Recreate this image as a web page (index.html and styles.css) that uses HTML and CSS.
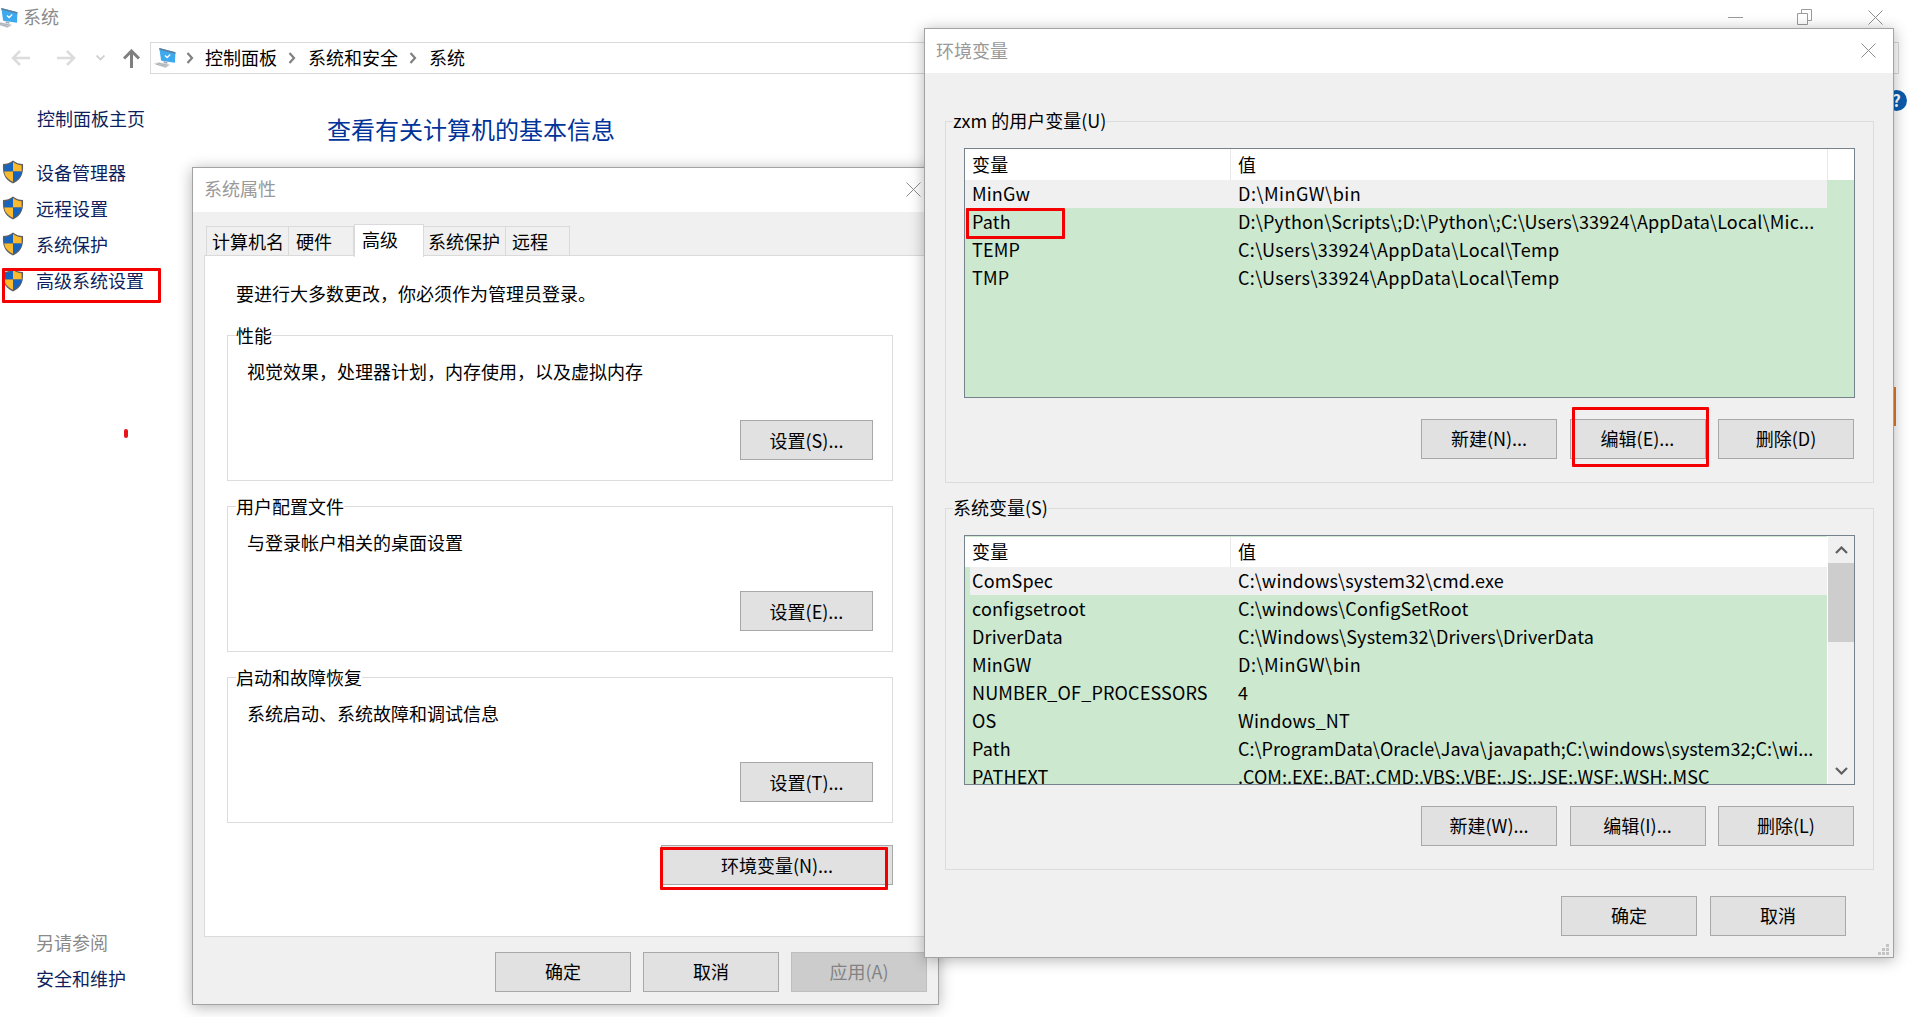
FILE: index.html
```html
<!DOCTYPE html>
<html>
<head>
    <title>系统</title>
    <meta name="viewport" content="width=device-width, initial-scale=1.0">
    <link rel="stylesheet" href="styles.css">
</head>
<body>
    <svg class="defs" width="0" height="0">
        <symbol id="shield" viewBox="0 0 22 24">
            <path d="M11 0.500 C8 3 4.500 4 1 4 C0.500 12 1.500 19 11 23.500 C20.500 19 21.500 12 21 4 C17.500 4 14 3 11 0.500 Z" fill="#5f5f5f"/>
            <path d="M11 2 C8.500 4 5.500 5 2.500 5.200 L2.300 11.500 H11 Z" fill="#1565c0"/>
            <path d="M11 2 C13.500 4 16.500 5 19.500 5.200 L19.700 11.500 H11 Z" fill="#fbb92e"/>
            <path d="M2.300 11.500 H11 V21.800 C5 19 2.700 15.500 2.300 11.500 Z" fill="#fbb92e"/>
            <path d="M19.700 11.500 H11 V21.800 C17 19 19.300 15.500 19.700 11.500 Z" fill="#1565c0"/>
        </symbol>
        <symbol id="computer" viewBox="0 0 24 21">
            <path d="M6.500 0 L23.500 4.500 L23 15.500 L8.500 13.500 Z" fill="#3fa9ef"/>
            <path d="M6.500 0 L23.500 4.500 L23.400 6 L6.800 1.800 Z" fill="#5c7f99"/>
            <path d="M12.500 7.800 L14.800 10 L18 6.800" fill="none" stroke="#fff" stroke-width="1.300"/>
            <path d="M11 14 L15 14.500 L15 16.500 L11 16 Z" fill="#a4adb3"/>
            <path d="M0.500 16.500 L6 15 L18 17.500 L13 21 Z" fill="#cfd4d8"/>
            <path d="M3 17 L14 19.500 M5 16 L16 18.200" stroke="#98a1a8" stroke-width="0.700"/>
        </symbol>
        <symbol id="cross" viewBox="0 0 15 15">
            <path d="M0.500 0.500 L14.500 14.500 M14.500 0.500 L0.500 14.500" fill="none" stroke="#8c8c8c" stroke-width="1"/>
        </symbol>
    </svg>

    <div class="window">
        <div class="titlebar">
            <svg class="title-icon"><use href="#computer"/></svg>
            <span class="window-title">系统</span>
            <div class="window-controls">
                <svg width="15" height="15" viewBox="0 0 15 15"><path d="M0 7.500 H15" stroke="#9a9a9a" stroke-width="1"/></svg>
                <svg width="15" height="16" viewBox="0 0 15 16"><path d="M0.500 4.500 H10.500 V15.500 H0.500 Z M4.500 4.500 V0.500 H14.500 V11.500 H10.500" fill="none" stroke="#9a9a9a" stroke-width="1"/></svg>
                <svg class="control-close" width="15" height="15"><use href="#cross"/></svg>
            </div>
        </div>

        <div class="navbar">
            <svg class="nav-back" width="19" height="16" viewBox="0 0 19 16"><path d="M19 8 H2 M9 1 L2 8 L9 15" fill="none" stroke="#dcdcdc" stroke-width="2.500"/></svg>
            <svg class="nav-forward" width="19" height="16" viewBox="0 0 19 16"><path d="M0 8 H17 M10 1 L17 8 L10 15" fill="none" stroke="#dcdcdc" stroke-width="2.500"/></svg>
            <svg class="nav-down" width="9" height="6" viewBox="0 0 9 6"><path d="M0.500 0.500 L4.500 4.500 L8.500 0.500" fill="none" stroke="#d0d0d0" stroke-width="1.800"/></svg>
            <svg class="nav-up" width="17" height="19" viewBox="0 0 17 19"><path d="M8.500 19 V3 M1 9.500 L8.500 2 L16 9.500" fill="none" stroke="#7f7f7f" stroke-width="3"/></svg>
            <div class="address">
                <svg class="address-icon"><use href="#computer"/></svg>
                <svg class="sep" width="8" height="12" viewBox="0 0 8 12"><path d="M1.500 1 L6 6 L1.500 11" fill="none" stroke="#808080" stroke-width="2.200"/></svg>
                <span>控制面板</span>
                <svg class="sep" width="8" height="12" viewBox="0 0 8 12"><path d="M1.500 1 L6 6 L1.500 11" fill="none" stroke="#808080" stroke-width="2.200"/></svg>
                <span>系统和安全</span>
                <svg class="sep" width="8" height="12" viewBox="0 0 8 12"><path d="M1.500 1 L6 6 L1.500 11" fill="none" stroke="#808080" stroke-width="2.200"/></svg>
                <span>系统</span>
            </div>
        </div>

        <div class="main">
            <div class="sidebar">
                <div class="side-home">控制面板主页</div>
                <div class="side-item"><svg class="shield"><use href="#shield"/></svg>设备管理器</div>
                <div class="side-item"><svg class="shield"><use href="#shield"/></svg>远程设置</div>
                <div class="side-item"><svg class="shield"><use href="#shield"/></svg>系统保护</div>
                <div class="side-item"><svg class="shield"><use href="#shield"/></svg>高级系统设置</div>
                <div class="side-bottom">
                    <div class="side-muted">另请参阅</div>
                    <div class="side-link">安全和维护</div>
                </div>
            </div>
            <h1 class="page-heading">查看有关计算机的基本信息</h1>
        </div>
    </div>

    <div class="help-dot">?</div>
    <div class="orange-edge"></div>
    <div class="red-dot"></div>

    <!-- 系统属性 -->
    <div class="dialog sys-dialog">
        <div class="dialog-title">
            <span>系统属性</span>
            <svg class="dialog-close"><use href="#cross"/></svg>
        </div>
        <div class="dialog-body">
            <div class="tabs">
                <div class="tab">计算机名</div>
                <div class="tab">硬件</div>
                <div class="tab tab-active">高级</div>
                <div class="tab">系统保护</div>
                <div class="tab">远程</div>
            </div>
            <div class="tab-panel">
                <div class="panel-intro">要进行大多数更改，你必须作为管理员登录。</div>
                <div class="group sys-group">
                    <div class="group-title">性能</div>
                    <div class="group-desc">视觉效果，处理器计划，内存使用，以及虚拟内存</div>
                    <div class="btn-row"><button class="btn btn-set">设置(S)...</button></div>
                </div>
                <div class="group sys-group">
                    <div class="group-title">用户配置文件</div>
                    <div class="group-desc">与登录帐户相关的桌面设置</div>
                    <div class="btn-row"><button class="btn btn-set">设置(E)...</button></div>
                </div>
                <div class="group sys-group">
                    <div class="group-title">启动和故障恢复</div>
                    <div class="group-desc">系统启动、系统故障和调试信息</div>
                    <div class="btn-row"><button class="btn btn-set">设置(T)...</button></div>
                </div>
                <div class="env-row"><button class="btn btn-env">环境变量(N)...</button></div>
            </div>
            <div class="sys-footer">
                <button class="btn">确定</button>
                <button class="btn">取消</button>
                <button class="btn btn-disabled">应用(A)</button>
            </div>
        </div>
    </div>

    <!-- 环境变量 -->
    <div class="dialog env-dialog">
        <div class="dialog-title">
            <span>环境变量</span>
            <svg class="dialog-close"><use href="#cross"/></svg>
        </div>
        <div class="dialog-body env-body">
            <div class="group env-group">
                <div class="group-title">zxm 的用户变量(U)</div>
                <div class="list">
                    <div class="list-main">
                        <div class="list-head"><div class="cell cell-head">变量</div><div class="cell">值</div></div>
                        <div class="row row-current"><div class="cell">MinGw</div><div class="cell ls-xwide">D:\MinGW\bin</div></div>
                        <div class="row"><div class="cell">Path</div><div class="cell">D:\Python\Scripts\;D:\Python\;C:\Users\33924\AppData\Local\Mic...</div></div>
                        <div class="row"><div class="cell">TEMP</div><div class="cell ls-wide">C:\Users\33924\AppData\Local\Temp</div></div>
                        <div class="row"><div class="cell">TMP</div><div class="cell ls-wide">C:\Users\33924\AppData\Local\Temp</div></div>
                    </div>
                    <div class="list-gutter"></div>
                </div>
                <div class="btn-row env-btns">
                    <button class="btn btn-env-small">新建(N)...</button>
                    <button class="btn btn-env-small">编辑(E)...</button>
                    <button class="btn btn-env-small">删除(D)</button>
                </div>
            </div>
            <div class="group env-group">
                <div class="group-title">系统变量(S)</div>
                <div class="list">
                    <div class="list-main">
                        <div class="list-head list-head-gap"><div class="cell cell-head">变量</div><div class="cell">值</div></div>
                        <div class="row row-current row-inset"><div class="cell">ComSpec</div><div class="cell">C:\windows\system32\cmd.exe</div></div>
                        <div class="row"><div class="cell">configsetroot</div><div class="cell">C:\windows\ConfigSetRoot</div></div>
                        <div class="row"><div class="cell">DriverData</div><div class="cell">C:\Windows\System32\Drivers\DriverData</div></div>
                        <div class="row"><div class="cell">MinGW</div><div class="cell ls-xwide">D:\MinGW\bin</div></div>
                        <div class="row"><div class="cell">NUMBER_OF_PROCESSORS</div><div class="cell">4</div></div>
                        <div class="row"><div class="cell">OS</div><div class="cell">Windows_NT</div></div>
                        <div class="row"><div class="cell">Path</div><div class="cell ls-none">C:\ProgramData\Oracle\Java\javapath;C:\windows\system32;C:\wi...</div></div>
                        <div class="row"><div class="cell">PATHEXT</div><div class="cell ls-none">.COM;.EXE;.BAT;.CMD;.VBS;.VBE;.JS;.JSE;.WSF;.WSH;.MSC</div></div>
                    </div>
                    <div class="scrollbar">
                        <div class="scroll-arrow">
                            <svg width="13" height="8" viewBox="0 0 13 8"><path d="M1 7 L6.500 1.500 L12 7" fill="none" stroke="#606060" stroke-width="2.200"/></svg>
                        </div>
                        <div class="scroll-thumb"></div>
                        <div class="scroll-track"></div>
                        <div class="scroll-arrow">
                            <svg width="13" height="8" viewBox="0 0 13 8"><path d="M1 1 L6.500 6.500 L12 1" fill="none" stroke="#606060" stroke-width="2.200"/></svg>
                        </div>
                    </div>
                </div>
                <div class="btn-row env-btns">
                    <button class="btn btn-env-small">新建(W)...</button>
                    <button class="btn btn-env-small">编辑(I)...</button>
                    <button class="btn btn-env-small">删除(L)</button>
                </div>
            </div>
            <div class="env-footer">
                <button class="btn btn-env-small">确定</button>
                <button class="btn btn-env-small">取消</button>
            </div>
        </div>
        <svg class="grip" width="11" height="11" viewBox="0 0 11 11"><path d="M8 0 h3 v3 h-3 Z M4 4 h3 v3 h-3 Z M8 4 h3 v3 h-3 Z M0 8 h3 v3 h-3 Z M4 8 h3 v3 h-3 Z M8 8 h3 v3 h-3 Z" fill="#c4c4c4"/></svg>
    </div>

    <!-- 红框标注 -->
    <div class="mark mark-side"></div>
    <div class="mark mark-env"></div>
    <div class="mark mark-path"></div>
    <div class="mark mark-edit"></div>
</body>
</html>
```

FILE: styles.css
```css
* {
    box-sizing: border-box;
}
html, body {
    margin: 0;
    padding: 0;
}
body {
    position: relative;
    width: 1912px;
    height: 1017px;
    overflow: hidden;
    background-color: white;
    color: black;
    font-family: "Noto Sans CJK SC", "Noto Sans", sans-serif;
    font-size: 18px;
    line-height: 28px;
}
.defs {
    position: absolute;
}

/* window behind the dialogs */
.window {
    display: flex;
    flex-direction: column;
    height: 1017px;
}
.titlebar {
    display: flex;
    align-items: center;
    height: 34px;
}
.title-icon {
    width: 23px;
    height: 20px;
    margin-left: -5px;
    margin-top: 2px;
}
.window-title {
    margin-left: 5px;
    margin-bottom: 2px;
    color: #8a8a8a;
}
.window-controls {
    display: flex;
    align-items: center;
    gap: 54px;
    margin-left: auto;
    margin-right: 29px;
}
.control-close {
    margin-left: 2px;
}
.navbar {
    display: flex;
    align-items: center;
    height: 32px;
    margin-top: 8px;
}
.nav-back {
    margin-left: 11px;
}
.nav-forward {
    margin-left: 27px;
}
.nav-down {
    margin-left: 20px;
}
.nav-up {
    margin-left: 18px;
}
.address {
    display: flex;
    align-items: center;
    flex: 1;
    height: 32px;
    margin-left: 10px;
    margin-right: 13px;
    padding-left: 2px;
    border: 1px solid #d9d9d9;
}
.address span {
    margin-bottom: 2px;
}
.address-icon {
    width: 23px;
    height: 20px;
}
.sep {
    margin: 0 12px 0 11px;
}
.address-icon + .sep {
    margin: 0 11px 0 10px;
}
.main {
    display: flex;
    flex: 1;
}
.sidebar {
    display: flex;
    flex-direction: column;
    width: 327px;
    padding-bottom: 21px;
}
.side-home {
    margin-top: 30px;
    margin-bottom: 22px;
    padding-left: 37px;
    color: #0d1f5c;
}
.side-item {
    display: flex;
    align-items: center;
    height: 36px;
    padding-left: 2px;
    color: #0d1f5c;
}
.shield {
    width: 22px;
    height: 24px;
    margin-right: 12px;
}
.side-bottom {
    margin-top: auto;
    padding-left: 36px;
}
.side-muted {
    height: 36px;
    line-height: 36px;
    color: #8a8a8a;
}
.side-link {
    height: 36px;
    line-height: 36px;
    color: #0d1f5c;
}
.page-heading {
    margin: 37px 0 0 0;
    font-size: 24px;
    font-weight: normal;
    line-height: 36px;
    color: #003399;
}

/* stray bits of the window that stay visible */
.help-dot {
    position: absolute;
    left: 1886px;
    top: 90px;
    width: 21px;
    height: 21px;
    border-radius: 50%;
    background-color: #0b5cad;
    color: white;
    font-size: 16px;
    font-weight: bold;
    line-height: 21px;
    text-align: center;
}
.orange-edge {
    position: absolute;
    left: 1894px;
    top: 387px;
    width: 2px;
    height: 39px;
    background-color: #e0782c;
}
.red-dot {
    position: absolute;
    left: 124px;
    top: 429px;
    width: 4px;
    height: 9px;
    border-radius: 2px;
    background-color: #e8141c;
}

/* dialogs */
.dialog {
    position: absolute;
    display: flex;
    flex-direction: column;
    border: 1px solid #a3a3a3;
    background-color: #f0f0f0;
    box-shadow: 0 2px 14px rgba(0, 0, 0, 0.3);
}
.sys-dialog {
    left: 192px;
    top: 167px;
    width: 747px;
    height: 838px;
}
.env-dialog {
    left: 924px;
    top: 28px;
    width: 970px;
    height: 930px;
}
.dialog-title {
    display: flex;
    justify-content: space-between;
    align-items: center;
    flex-shrink: 0;
    height: 44px;
    padding: 0 17px 2px 11px;
    background-color: white;
    color: #999;
}
.sys-dialog .dialog-title span {
    margin-bottom: 2px;
}
.dialog-close {
    width: 15px;
    height: 15px;
    margin-top: 1px;
}
.dialog-body {
    flex: 1;
    padding: 14px 11px 0 11px;
}
.env-body {
    padding: 48px 19px 0 20px;
}
.grip {
    position: absolute;
    right: 4px;
    bottom: 2px;
}

/* tabs */
.tabs {
    display: flex;
    height: 30px;
    margin-left: 2px;
    margin-bottom: -1px;
}
.tab {
    position: relative;
    height: 30px;
    padding-left: 7px;
    border: 1px solid #dadada;
    border-left: none;
    border-bottom: none;
    color: black;
    line-height: 28px;
}
.tab:nth-child(1) {
    width: 83px;
    padding-left: 5px;
    border-left: 1px solid #dadada;
}
.tab:nth-child(2) {
    width: 65px;
}
.tab:nth-child(3) {
    width: 70px;
}
.tab:nth-child(4) {
    width: 82px;
    padding-left: 4px;
}
.tab:nth-child(5) {
    width: 64px;
    padding-left: 6px;
}
.tab-active {
    height: 33px;
    margin-top: -2px;
    padding-left: 7px;
    background-color: white;
    border-left: 1px solid #dadada;
    z-index: 1;
}
.tab-panel {
    height: 682px;
    padding: 0 33px 0 22px;
    background-color: white;
    border: 1px solid #dadada;
}
.panel-intro {
    margin-top: 23px;
    margin-bottom: 28px;
    padding-left: 9px;
}

/* groups */
.group {
    border: 1px solid #dcdcdc;
    background-color: inherit;
}
.group-title {
    width: fit-content;
    height: 24px;
    margin: -13px 0 0 8px;
    background-color: inherit;
    line-height: 24px;
}
.sys-group {
    height: 146px;
    margin-bottom: 25px;
    background-color: white;
}
.sys-group .btn-row {
    margin-top: 35px;
    padding-right: 19px;
}
.sys-group .btn {
    padding-bottom: 0;
}
.group-desc {
    margin-top: 10px;
    padding-left: 19px;
}
.env-group {
    height: 362px;
    margin-bottom: 25px;
    background-color: #f0f0f0;
}
.env-group .group-title {
    margin: -14px 0 0 7px;
}
.btn-row {
    display: flex;
    justify-content: flex-end;
    gap: 12.500px;
}
.env-btns {
    margin-top: 21px;
    padding-right: 19px;
}
.env-row {
    display: flex;
    justify-content: flex-end;
    margin-top: -3px;
}
.sys-footer {
    display: flex;
    justify-content: flex-end;
    gap: 12px;
    margin-top: 15px;
}
.env-footer {
    display: flex;
    justify-content: flex-end;
    gap: 13px;
    margin-top: 26px;
    padding-right: 28px;
}

/* buttons */
.btn {
    width: 136px;
    height: 40px;
    padding: 0 0 2px 0;
    background-color: #e1e1e1;
    border: 1px solid #a8a8a8;
    border-radius: 0;
    color: black;
    font-family: inherit;
    font-size: 18px;
}
.btn-set {
    width: 133px;
}
.btn-env {
    width: 232px;
    padding-bottom: 0;
}
.btn-env-small {
    width: 136px;
}
.btn-disabled {
    background-color: #cccccc;
    border-color: #bfbfbf;
    color: #838383;
}

/* variable lists */
.list {
    display: flex;
    width: 891px;
    height: 250px;
    margin-top: 16px;
    margin-left: 18px;
    overflow: hidden;
    background-color: #cce8cf;
    border: 1px solid #77838c;
}
.list-main {
    width: 862px;
}
.list-gutter {
    flex: 1;
    height: 31px;
    background-color: white;
    border-left: 1px solid #e8e8e8;
}
.list-head {
    display: grid;
    grid-template-columns: 266px 1fr;
    height: 31px;
    background-color: white;
    line-height: 31px;
}
.list-head-gap {
    height: 30px;
    margin-top: 1px;
    line-height: 28px;
}
.cell {
    padding-left: 7px;
    letter-spacing: 0.150px;
    white-space: nowrap;
}
.ls-none {
    letter-spacing: 0;
}
.ls-wide {
    letter-spacing: 0.350px;
}
.ls-xwide {
    letter-spacing: 0.500px;
}
.cell-head {
    border-right: 1px solid #e8e8e8;
}
.row {
    display: grid;
    grid-template-columns: 266px 1fr;
    height: 28px;
    line-height: 26px;
}
.row-current {
    background-color: #f0f0f0;
}
.row-inset {
    grid-template-columns: 261px 1fr;
    border-left: 5px solid #cce8cf;
}
.row-inset .cell:first-child {
    padding-left: 2px;
}
.scrollbar {
    display: flex;
    flex-direction: column;
    flex: 1;
    background-color: #f0f0f0;
    border-left: 1px solid white;
}
.scroll-arrow {
    display: flex;
    justify-content: center;
    align-items: center;
    flex-shrink: 0;
    height: 27px;
}
.scroll-thumb {
    flex-shrink: 0;
    height: 79px;
    background-color: #cdcdcd;
}
.scroll-track {
    flex: 1;
}

/* red annotation boxes drawn over the screenshot */
.mark {
    position: absolute;
    border: 3px solid #f40000;
    border-radius: 1px;
}
.mark-side {
    left: 2px;
    top: 268px;
    width: 159px;
    height: 35px;
}
.mark-env {
    left: 660px;
    top: 847px;
    width: 228px;
    height: 43px;
}
.mark-path {
    left: 966px;
    top: 208px;
    width: 99px;
    height: 31px;
}
.mark-edit {
    left: 1572px;
    top: 407px;
    width: 137px;
    height: 60px;
}
```
